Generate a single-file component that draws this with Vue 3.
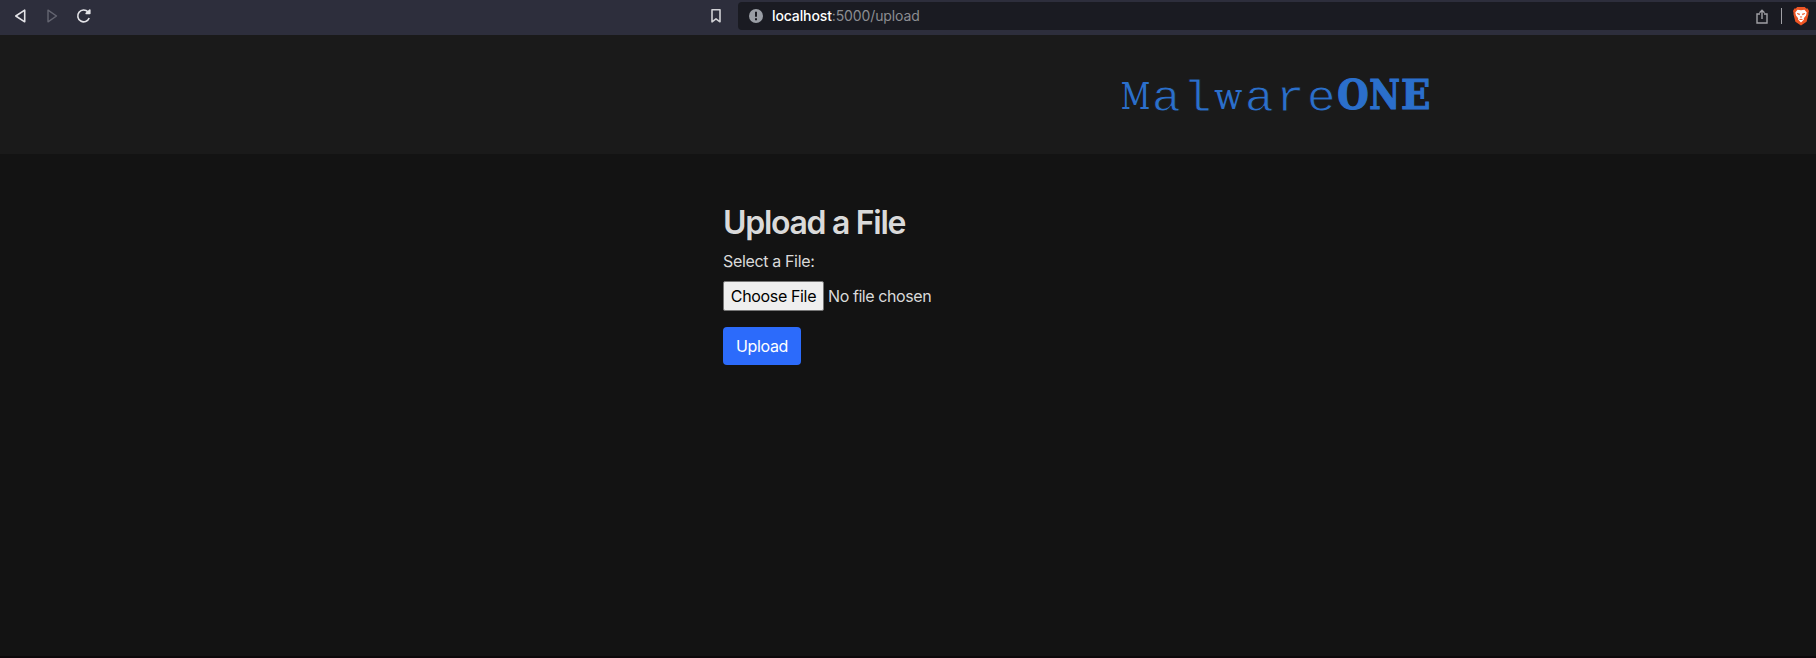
<script setup>
const thin = [
  ['M', 'slab wide'], ['a', ''], ['l', ''], ['w', 'slab mid'], ['a', ''], ['r', ''], ['e', '']
]
const bold = ['O', 'N', 'E']
</script>

<template>
  <div class="page">
    <div class="toolbar">
      <div class="nav">
        <svg width="14" height="16" viewBox="0 0 14 16"><path d="M11.700 2.200v11.600L2.800 8z" /></svg>
        <svg class="dim" width="14" height="16" viewBox="0 0 14 16"><path d="M3 2.200v11.600L11.500 8z" /></svg>
        <svg width="16" height="16" viewBox="0 0 16 16">
          <path d="M13.200 10A5.900 5.900 0 1 1 12 3.900" />
          <path d="M10.200 5.400h3.600V2.100z" fill="#e8e8ea" />
        </svg>
      </div>
      <svg class="bookmark" width="12" height="16" viewBox="0 0 12 16"><path d="M2 1.800h8v12l-4-3-4 3z" /></svg>
      <div class="address">
        <svg class="info" width="14" height="14" viewBox="0 0 14 14">
          <circle cx="7" cy="7" r="7" fill="#9a9ea5" />
          <path d="M7 2.800v5" stroke="#1a1b22" stroke-width="2" />
          <path d="M7 9.300v2" stroke="#1a1b22" stroke-width="2" />
        </svg>
        <div class="url"><span>localhost</span>:5000/upload</div>
        <svg class="share" width="12" height="15" viewBox="0 0 12 15">
          <path d="M4 5H1v9h10V5H8M6 10V1.500M3.500 3.800 6 1.300l2.500 2.500" />
        </svg>
        <i class="divider"></i>
        <svg class="lion" width="16" height="19" viewBox="0 0 16 19">
          <path d="M4.200 0h7.600l1.400 1.500 1.500-.1L16 4l-.6 2 .2 1-2 7.700L8 18.600l-5.600-3.900L.4 7l.2-1L0 4l1.300-2.600 1.500.1z" fill="#ee5524" />
          <path d="M4.500 2.700 8 3.300l3.500-.6 2.200 2.800-.7 3-2.200 2.700.2 1.400L8 15.400l-3-2.800.2-1.400L3 8.500l-.7-3z" fill="#fff" />
          <path d="m4 6 3 .7-.5 1.600L4.200 7zM12 6l-3 .7.5 1.600L11.800 7zM6.700 9.500h2.600L8 11zM5.700 12.600 8 11.700l2.300.9L8 13z" fill="#ee5524" />
        </svg>
      </div>
    </div>
    <header>
      <div class="brand">
        <span v-for="(c, i) in thin" :key="i" class="cell" :class="c[1]"><b>{{ c[0] }}</b></span><span v-for="c in bold" :key="c" class="cell strong" :class="'k' + c"><b>{{ c }}</b></span>
      </div>
    </header>
    <main>
      <h1>Upload a File</h1>
      <label>Select a File:</label>
      <div class="picker"><button class="choose">Choose File</button><span>No file chosen</span></div>
      <button class="upload">Upload</button>
    </main>
  </div>
</template>

<style>
body { background: #131313; }
</style>

<style scoped>
.page { height: 658px; box-sizing: border-box; border-bottom: 2px solid #0c080a; overflow: hidden; background: #131313; color: #dadada; font-family: Inter, "Liberation Sans", sans-serif; }
.toolbar { height: 35px; box-sizing: border-box; background: #2d2e3c; display: flex; align-items: flex-start; }
svg { display: block; flex: none; }
.nav { display: flex; width: 710px; padding: 8px 0 0 13px; box-sizing: border-box; }
.nav svg, .bookmark, .share { fill: none; stroke: #e4e4e8; stroke-width: 1.6; stroke-linejoin: round; }
.nav .dim { margin-left: 18px; stroke: #646571; stroke-width: 1.4; }
.nav svg:last-child { margin-left: 17px; }
.bookmark { margin-top: 8px; stroke: #d0d0d4; }
.address { margin: 2px 0 0 16px; height: 28px; width: 1078px; background: #1a1b22; border-radius: 4px 0 0 4px; display: flex; align-items: center; }
.info { margin-left: 11px; }
.url { margin-left: 9px; font-size: 14px; line-height: 20px; letter-spacing: -.12px; color: #8c8d92; flex: 1; }
.url span { color: #fff; font-weight: 500; }
.share { stroke: #a0a0a5; stroke-width: 1.4; stroke-linejoin: miter; }
.divider { width: 1px; height: 16px; background: #a0a0a5; margin: 0 11px 0 13px; }
.lion { margin-right: 7px; }
header { height: 119px; background: #1a1a1a; box-sizing: border-box; padding: 32px 0 0 1120px; }
.brand { display: flex; color: #2b6fcb; height: 60px; }
.cell { width: 31px; display: flex; justify-content: center; font-family: "Liberation Mono", monospace; font-size: 44px; line-height: 64px; }
.cell b { display: block; font-weight: 400; -webkit-text-stroke: .9px #1a1a1a; transform: scaleX(1.1); }
.slab { font-family: "DejaVu Serif", serif; font-size: 38px; line-height: 59px; }
.slab b { -webkit-text-stroke: 0; }
.wide b { transform: scaleX(.76); }
.mid b { transform: scaleX(.86); }
.strong { font-family: "DejaVu Serif", serif; font-size: 41px; line-height: 56px; }
.strong b { font-weight: 700; -webkit-text-stroke: 1.2px #2b6fcb; }
.kO b { transform: scaleX(.88); }
.kN b { transform: scaleX(.82) translateX(1px); }
.kE b { transform: scaleX(.94) translateX(1px); }
main { padding: 50px 0 0 723px; display: flex; flex-direction: column; align-items: flex-start; }
h1 { margin: 0 0 7px; font-size: 32px; line-height: 38px; font-weight: 600; letter-spacing: -1.3px; }
label { font-size: 16px; line-height: 24px; letter-spacing: -.35px; margin-bottom: 8px; }
.picker { display: flex; align-items: center; height: 30px; font-size: 16px; letter-spacing: -.42px; }
button { font: inherit; letter-spacing: -.35px; padding: 0; box-sizing: border-box; white-space: nowrap; }
.choose { width: 101px; height: 30px; background: #efefef; color: #000; border: 1px solid #767676; border-radius: 2px; margin-right: 4px; }
.upload { margin-top: 16px; width: 78px; height: 38px; border: 0; border-radius: 4px; background: #2c6bfb; color: #fff; font-size: 16px; }
</style>
